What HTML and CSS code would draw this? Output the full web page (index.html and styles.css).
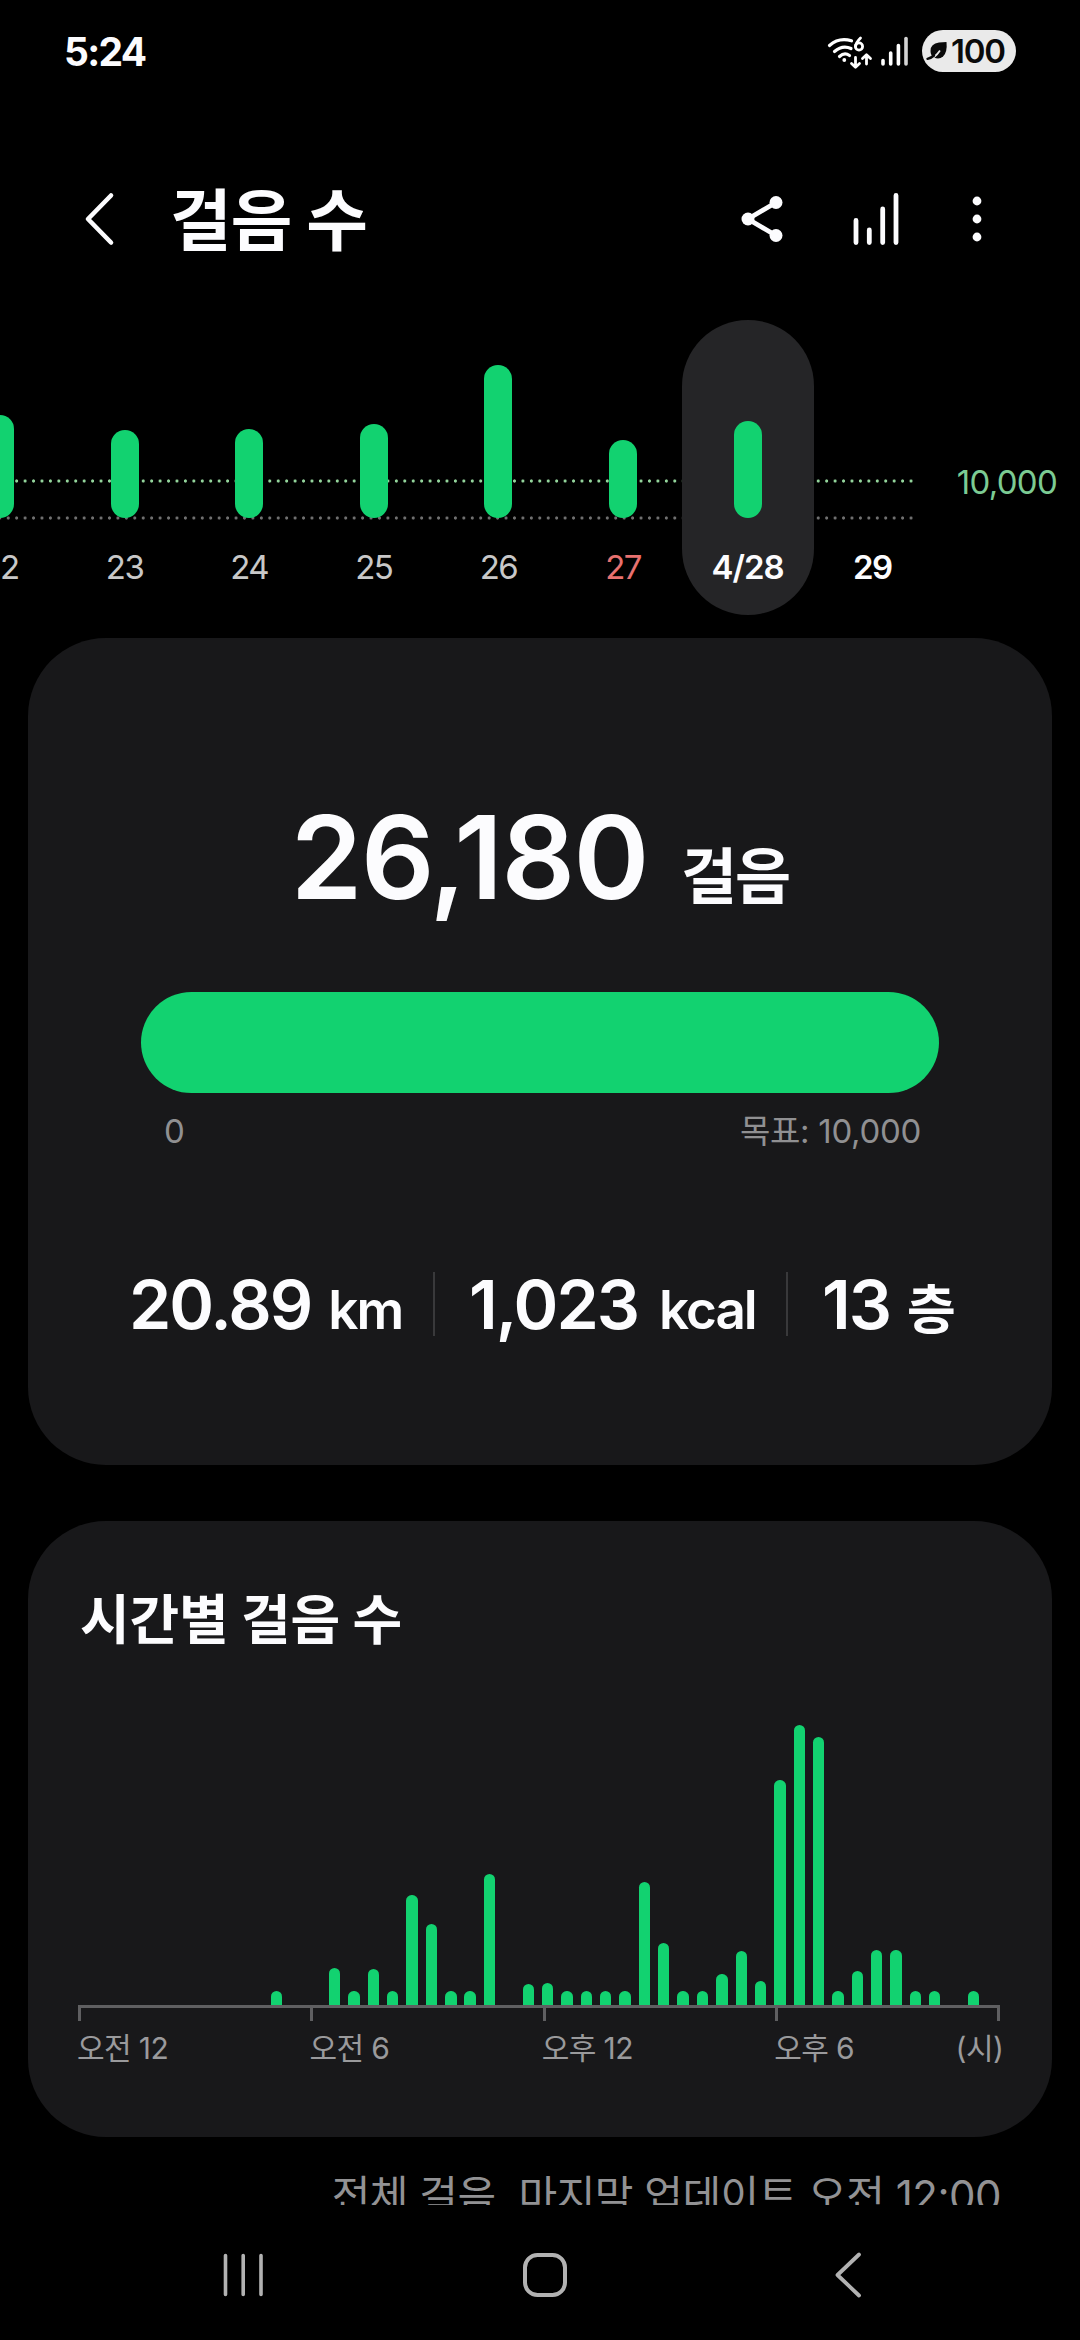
FILE: index.html
```html
<!DOCTYPE html>
<html lang="ko">
<head>
<meta charset="utf-8">
<title>걸음 수</title>
<link rel="stylesheet" href="styles.css">
</head>
<body>
<div class="screen">
  <div class="status">
    <span class="clock">5:24</span>
    <div class="status-icons">
      <svg class="wifi" width="48" height="40" viewBox="0 0 48 40" fill="none" stroke="#fff" stroke-width="3.200" stroke-linecap="round" stroke-linejoin="round">
        <path d="M3.500 12.500Q13 4 25.500 7.800"/>
        <path d="M8.500 18.500Q16.500 11.500 25 15.500"/>
        <path d="M13.500 23.500Q18.500 19 23.500 22.500"/>
        <circle cx="18.300" cy="27" r="1.900" fill="#fff" stroke="none"/>
        <path d="M34.500 5Q30 9.500 29.500 13.500" stroke-width="2.800"/>
        <circle cx="33" cy="13.500" r="3.600" stroke-width="2.800"/>
        <path d="M29.500 24.500V34M25.500 30.500L29.500 34.300L33.500 30.500" stroke-width="2.800"/>
        <path d="M40.500 31V22.500M36.500 25.500L40.500 21.700L44.500 25.500" stroke-width="2.800"/>
      </svg>
      <svg class="signal" width="30" height="32" viewBox="0 0 30 32" stroke="#fff" stroke-width="3.600" stroke-linecap="round">
        <path d="M3 25.500V29M10.700 18V29M18.400 10.500V29"/><path d="M26 3.500V29" stroke="#d4d4d4"/>
      </svg>
      <div class="battery">
        <svg width="23" height="22" viewBox="0 0 23 22">
          <path d="M20.500 2L13 2.500Q4.500 3.500 4.500 11Q4.500 15.500 8 17.500Q13 20 17 16.500Q21.500 12.500 20.500 2Z" fill="#0a0a0a"/>
          <path d="M1.500 20.500Q9 18 14 10.500" fill="none" stroke="#eaeaea" stroke-width="1.800"/>
          <path d="M1.500 18.800Q5.500 17.800 8 15.500" fill="none" stroke="#0a0a0a" stroke-width="2.400" stroke-linecap="round"/>
        </svg>
        <span>100</span>
      </div>
    </div>
  </div>

  <header class="header">
    <svg class="back" width="34" height="60" viewBox="0 0 34 60" fill="none" stroke="#fcfcfe" stroke-width="4.600" stroke-linecap="round" stroke-linejoin="round"><path d="M28 6.500L5 30L28 53.500"/></svg>
    <h1>걸음 수</h1>
    <svg class="share" width="46" height="60" viewBox="0 0 46 60" fill="#fcfcfe" stroke="#fcfcfe"><path d="M37 13.500L9 30L37 46.500" fill="none" stroke-width="4.800"/><circle cx="9" cy="30" r="6.500" stroke="none"/><circle cx="37" cy="13.500" r="6.500" stroke="none"/><circle cx="37" cy="46.500" r="6.500" stroke="none"/></svg>
    <svg class="bars" width="50" height="60" viewBox="0 0 50 60" stroke="#fcfcfe" stroke-width="4.800" stroke-linecap="round"><path d="M5 31.500V53.500M18.300 41V53.500M31.700 20V53.500M45 6.500V53.500"/></svg>
    <svg class="more" width="10" height="60" viewBox="0 0 10 60" fill="#fcfcfe"><circle cx="5" cy="12" r="4.400"/><circle cx="5" cy="30" r="4.400"/><circle cx="5" cy="48" r="4.400"/></svg>
  </header>

  <section class="week">
    <div class="days">
      <div class="day"><i style="height:103px"></i><b>22</b></div>
      <div class="day"><i style="height:88px"></i><b>23</b></div>
      <div class="day"><i style="height:89px"></i><b>24</b></div>
      <div class="day"><i style="height:94px"></i><b>25</b></div>
      <div class="day"><i style="height:153px"></i><b>26</b></div>
      <div class="day sunday"><i style="height:78px"></i><b>27</b></div>
      <div class="day selected"><i style="height:97px"></i><b>4/28</b></div>
      <div class="day today"><b>29</b></div>
    </div>
    <span class="goal">10,000</span>
  </section>

  <section class="card summary">
    <div class="total"><span class="total-num">26,180</span><span class="total-unit">걸음</span></div>
    <div class="progress"></div>
    <div class="range"><span>0</span><span>목표: 10,000</span></div>
    <div class="stats">
      <div class="stat"><span class="num">20.89</span><span class="unit">km</span></div>
      <div class="stat"><span class="num">1,023</span><span class="unit">kcal</span></div>
      <div class="stat"><span class="num">13</span><span class="unit ko">층</span></div>
    </div>
  </section>

  <section class="card hourly">
    <h2>시간별 걸음 수</h2>
    <div class="plot">
      <i></i><i></i><i></i><i></i><i></i><i></i><i></i><i></i><i></i><i></i>
      <i style="height:14px"></i><i></i><i></i><i style="height:37px"></i><i style="height:14px"></i><i style="height:36px"></i><i style="height:14px"></i><i style="height:110px"></i><i style="height:81px"></i><i style="height:14px"></i>
      <i style="height:14px"></i><i style="height:131px"></i><i></i><i style="height:21px"></i><i style="height:22px"></i><i style="height:14px"></i><i style="height:14px"></i><i style="height:14px"></i><i style="height:14px"></i><i style="height:123px"></i>
      <i style="height:62px"></i><i style="height:14px"></i><i style="height:14px"></i><i style="height:31px"></i><i style="height:54px"></i><i style="height:24px"></i><i style="height:225px"></i><i style="height:280px"></i><i style="height:268px"></i><i style="height:14px"></i>
      <i style="height:34px"></i><i style="height:55px"></i><i style="height:55px"></i><i style="height:14px"></i><i style="height:14px"></i><i></i><i style="height:14px"></i><i></i>
    </div>
    <div class="axis"><i></i><i></i><i></i><i></i></div>
    <div class="axis-labels"><span>오전 12</span><span>오전 6</span><span>오후 12</span><span>오후 6</span><span class="last">(시)</span></div>
  </section>

  <p class="updated">전체 걸음, 마지막 업데이트 오전 12:00</p>

  <nav class="nav">
    <svg width="44" height="50" viewBox="0 0 44 50" stroke="#b2b2b2" stroke-width="3.600" stroke-linecap="round"><path d="M4.500 5.500V44.500M22.200 5.500V44.500M40 5.500V44.500"/></svg>
    <svg class="home" width="50" height="50" viewBox="0 0 50 50" fill="none" stroke="#b2b2b2" stroke-width="4"><rect x="5" y="5" width="40" height="40" rx="12.500"/></svg>
    <svg width="30" height="50" viewBox="0 0 30 50" fill="none" stroke="#b2b2b2" stroke-width="3.800" stroke-linecap="round" stroke-linejoin="round"><path d="M25 4.500L3.500 25L25 45.500"/></svg>
  </nav>
</div>
</body>
</html>
```
FILE: styles.css
```css
* { box-sizing: border-box; }
html, body { margin: 0; background: #000; }
body {
  width: 1080px;
  height: 2340px;
  overflow: hidden;
  font-family: Inter, "Noto Sans CJK KR", sans-serif;
  color: #fcfcfe;
}
svg { display: block; flex: none; }
h1, h2, p { margin: 0; }
.screen {
  width: 1080px;
  height: 2340px;
  display: flex;
  flex-direction: column;
  overflow: hidden;
}

/* status bar */
.status {
  height: 102px;
  padding: 0 64px;
  display: flex;
  align-items: center;
  justify-content: space-between;
}
.clock { font-size: 39px; font-weight: 700; letter-spacing: -1.700px; }
.status-icons { display: flex; align-items: center; }
.wifi { margin: 4px 6px 0 0; }
.signal { margin-right: 12px; }
.battery {
  width: 94px;
  height: 42px;
  border-radius: 21px;
  background: #eaeaea;
  color: #0a0a0a;
  display: flex;
  align-items: center;
  gap: 2px;
  padding-left: 4px;
  font-size: 33px;
  line-height: 42px;
  font-weight: 600;
  letter-spacing: -1.200px;
}

/* title bar */
.header {
  height: 216px;
  padding: 18px 98px 0 83px;
  display: flex;
  align-items: center;
}
.header h1 {
  margin: 3px auto 0 53px;
  font-size: 67px;
  line-height: 90px;
  font-weight: 700;
  letter-spacing: -1px;
}
.share { margin-right: 66px; }
.bars { margin-right: 71px; }

/* daily bars */
.week {
  height: 320px;
  padding-top: 2px;
  display: flex;
  align-items: flex-start;
  justify-content: space-between;
}
.days {
  width: 916px;
  height: 295px;
  display: flex;
  background:
    radial-gradient(circle at 50% 50%, #93d49b 1.3px, transparent 1.9px) 4px 157px / 8.440px 8px repeat-x,
    radial-gradient(circle at 50% 50%, #707070 1.3px, transparent 1.9px) 4px 194px / 8.440px 8px repeat-x;
}
.day {
  flex: none;
  width: 132px;
  margin-right: -7.400px;
  height: 295px;
  border-radius: 66px;
  display: flex;
  flex-direction: column;
  align-items: center;
  justify-content: flex-end;
}
.day:first-child { margin-left: -66px; }
.day i { width: 28px; border-radius: 14px; background: #12d270; }
.day b {
  margin: 29px 0 28px;
  font-size: 33px;
  line-height: 40px;
  font-weight: 400;
  color: #c8c8c8;
  letter-spacing: -1.500px;
}
.day.sunday b { color: #e8716f; }
.day.selected { background: #252527; }
.day.selected b, .day.today b { font-weight: 600; color: #fcfcfe; }
.day.selected b { letter-spacing: -1px; }
.goal {
  margin: 142px 23px 0 0;
  font-size: 33px;
  line-height: 40px;
  letter-spacing: -0.700px;
  color: #7ccb93;
}

/* cards */
.card {
  margin: 0 28px;
  border-radius: 78px;
  background: #18181a;
  flex: none;
}
.summary { height: 827px; padding: 145px 0 0; }
.total {
  height: 150px;
  display: flex;
  align-items: baseline;
  justify-content: center;
  gap: 33px;
}
.total-num { font-size: 115px; line-height: 150px; font-weight: 600; letter-spacing: -1.500px; }
.total-unit { font-size: 61px; font-weight: 700; letter-spacing: -2px; }
.progress {
  width: 798px;
  height: 101px;
  margin: 59px auto 0;
  border-radius: 50.500px;
  background: #12d270;
}
.range {
  display: flex;
  justify-content: space-between;
  margin-top: 18px;
  padding: 0 131px 0 136px;
  font-size: 33px;
  line-height: 40px;
  letter-spacing: -0.300px;
  color: #909092;
}
.stats {
  height: 64px;
  margin-top: 121px;
  padding-left: 101px;
  display: flex;
}
.stat {
  display: flex;
  align-items: baseline;
  line-height: 64px;
  gap: 17px;
  font-weight: 600;
}
.stat + .stat { border-left: 2px solid #39393b; padding-left: 34px; }
.stat:nth-child(1) { width: 304px; }
.stat:nth-child(2) { width: 353px; gap: 21px; }
.num { font-size: 68px; letter-spacing: -2px; }
.unit { font-size: 53px; letter-spacing: -2px; }
.unit.ko { font-size: 53px; font-weight: 700; }

/* hourly chart */
.hourly { height: 616px; margin-top: 56px; }
.hourly h2 {
  height: 137px;
  padding: 60px 0 0 52px;
  font-size: 54px;
  line-height: 80px;
  font-weight: 700;
  letter-spacing: -0.200px;
}
.plot {
  height: 347px;
  margin-left: 45.300px;
  display: flex;
  align-items: flex-end;
}
.plot i {
  flex: none;
  width: 11.400px;
  margin: 0 3.985px;
  border-radius: 5.700px 5.700px 0 0;
  background: #12d270;
}
.axis {
  width: 922px;
  height: 16px;
  margin-left: 50px;
  border-top: 3px solid #5f5f61;
  border-right: 3px solid #5f5f61;
  display: flex;
}
.axis i { width: 232.400px; flex: none; border-left: 3px solid #5f5f61; }
.axis i:last-child { width: 220px; }
.axis-labels {
  display: flex;
  margin: 7px 0 0 49px;
  font-size: 30px;
  line-height: 40px;
  letter-spacing: -0.600px;
  color: #9a9a9c;
}
.axis-labels span { width: 232.400px; white-space: nowrap; }
.axis-labels .last { width: auto; margin-left: -51px; }

/* footer, scrolled partly out of view */
.updated {
  height: 68px;
  padding: 34px 79px 0 0;
  overflow: hidden;
  text-align: right;
  font-size: 42px;
  line-height: 50px;
  letter-spacing: -0.500px;
  color: #929294;
  flex: none;
}
.nav {
  height: 135px;
  padding: 5px 0 0 221px;
  display: flex;
  align-items: center;
}
.home { margin: 0 264px 0 255px; }
```
